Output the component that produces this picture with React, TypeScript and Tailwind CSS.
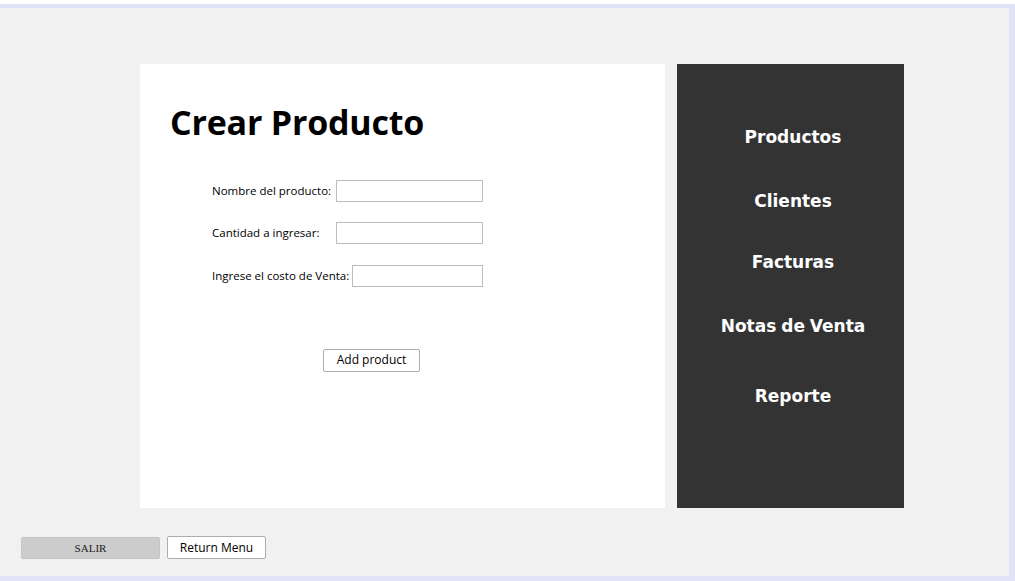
import React from 'react';

const navItems = [
  { label: 'Productos', gap: 'mt-[61px]' },
  { label: 'Clientes', gap: 'mt-[40px]' },
  { label: 'Facturas', gap: 'mt-[37px]' },
  { label: 'Notas de Venta', gap: 'mt-[40px]' },
  { label: 'Reporte', gap: 'mt-[46px]' },
];

const Field = ({ label, labelClass, inputClass, rowClass }: { label: string; labelClass: string; inputClass: string; rowClass: string }) => (
  <div className={`flex items-center ${rowClass}`}>
    <span className={`shrink-0 text-[11.5px] leading-none text-black ${labelClass}`}>{label}</span>
    <input type="text" className={`h-[22px] border border-[#bdbdbd] bg-white outline-none ${inputClass}`} />
  </div>
);

export default function App() {
  return (
    <div
      className="h-[581px] w-[1015px] overflow-hidden bg-white pt-[4px]"
      style={{ fontFamily: '"Open Sans", "Noto Sans", sans-serif' }}
    >
      <div className="flex h-[577px] w-[1015px] flex-col border-b-[5px] border-r-[6px] border-t-[4px] border-[#e1e1f7] bg-[#f1f1f1]">
        <div className="ml-[140px] mt-[56px] flex h-[444px] gap-[12px]">
          <div className="flex w-[525px] flex-col bg-white pl-[30px]">
            <h1 className="mt-[35px] text-[34px] font-bold leading-[46px] tracking-[-0.2px] text-black">Crear Producto</h1>
            <div className="ml-[42px] mt-[35px] flex flex-col">
              <Field label="Nombre del producto:" labelClass="w-[124px]" rowClass="" inputClass="w-[147px]" />
              <Field label="Cantidad a ingresar:" labelClass="w-[124px]" rowClass="mt-[20px]" inputClass="w-[147px]" />
              <Field label="Ingrese el costo de Venta:" labelClass="w-[140px]" rowClass="mt-[21px]" inputClass="w-[131px]" />
            </div>
            <div className="ml-[153px] mt-[59px]">
              <button
                type="button"
                className="h-[23px] w-[97px] rounded-[2px] border border-[#adadad] bg-white text-[12px] text-black"
              >
                Add product
              </button>
            </div>
          </div>
          <div className="flex w-[227px] flex-col items-center bg-[#333333] pl-[5px]">
            {navItems.map((item) => (
              <div
                key={item.label}
                className={`${item.gap} text-[17px] font-bold leading-[24px] tracking-[0px] text-white [word-spacing:-1px]`}
                style={{ fontFamily: '"DejaVu Sans", "Verdana", sans-serif' }}
              >
                {item.label}
              </div>
            ))}
          </div>
        </div>
        <div className="ml-[21px] mt-[29px] flex items-center gap-[7px]">
          <button
            type="button"
            className="h-[22px] w-[139px] rounded-[2px] border border-[#c4c4c4] bg-[#cccccc] text-[11px] text-[#222]"
            style={{ fontFamily: '"Liberation Serif", serif' }}
          >
            SALIR
          </button>
          <button
            type="button"
            className="-mt-[1px] h-[23px] w-[99px] rounded-[2px] border border-[#adadad] bg-white text-[12px] text-black"
          >
            Return Menu
          </button>
        </div>
      </div>
    </div>
  );
}
